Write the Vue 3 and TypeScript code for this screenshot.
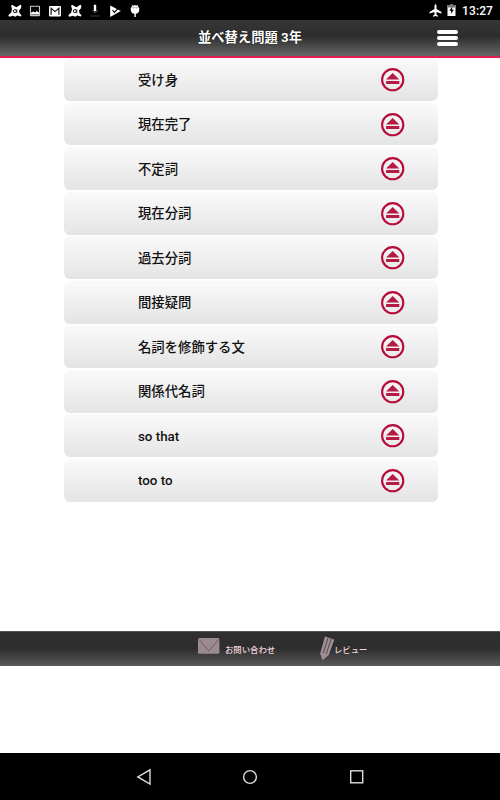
<script setup lang="ts">
const topics: string[] = [
  '受け身', '現在完了', '不定詞', '現在分詞', '過去分詞',
  '間接疑問', '名詞を修飾する文', '関係代名詞', 'so that', 'too to',
]
const statusIcons: string[] = ['avast', 'image', 'mail', 'avast', 'download', 'play', 'droid']
</script>

<template>
  <div class="screen">
    <div class="status">
      <div class="notes">
        <svg v-for="(icon, i) in statusIcons" :key="i" width="14" height="14" viewBox="0 0 14 14">
          <g v-if="icon === 'avast'">
            <path d="M3 1.6Q4.6 .4 6 2L8.6 3.2 12.2.8 13.4 1.4 13 4.2 11 6.6 11.4 9 13.6 11.4 12.8 12.6 9.4 11.4 7.2 12.8 5 11.8 1.2 12.8 .3 11.2 3.2 8.6 4 5Z" fill="#fff" />
            <ellipse cx="6.9" cy="7.1" rx="1.5" ry="1.6" fill="none" stroke="#000" stroke-width=".9" />
            <path d="M8.8 5.2V9" fill="none" stroke="#000" stroke-width=".8" />
          </g>
          <g v-else-if="icon === 'image'">
            <rect x="2.5" y="2.2" width="9" height="9.4" rx=".5" fill="none" stroke="#ccc" stroke-width="1.1" />
            <path d="M3 10.6V8.8L5.2 7.4 7 8.6 8.8 7 11 8.8V10.6Z" fill="#fff" />
          </g>
          <g v-else-if="icon === 'mail'">
            <rect x="1" y="2" width="12" height="10.4" rx="1" fill="#fff" />
            <path d="M3.1 10.8V4.2L7 7.6 10.9 4.2V10.8" fill="none" stroke="#000" stroke-width="1.1" />
          </g>
          <g v-else-if="icon === 'download'">
            <path d="M3.3 6.3H10.7L7 9.8ZM2.3 11.5H11.7V12.6H2.3Z" fill="#3b3b3b" />
            <path d="M7 .8V7" stroke="#fff" stroke-width="2.4" />
          </g>
          <g v-else-if="icon === 'play'">
            <path d="M2.2 1.4 12.8 7 2.2 13Z" fill="#fff" />
            <path d="M4.5 6.2 6.4 8.3 10.5 3.8" fill="none" stroke="#000" stroke-width="1.2" />
          </g>
          <g v-else>
            <path d="M2.8 3.7H11.2V6.5Q10.8 9.5 7.8 9.8V13H6.4V9.8Q3.2 9.5 2.8 6.5Z" fill="#fff" />
            <path d="M3.3 3.8Q4 1.6 7 1.6T10.7 3.8M4 .8 5 2.4M10 .8 9 2.4" fill="#fff" stroke="#fff" stroke-width=".7" />
            <path d="M5.2 4H6M8.1 4H8.9" stroke="#555" stroke-width=".8" />
          </g>
        </svg>
      </div>
      <div class="system">
        <svg width="13" height="13" viewBox="0 0 13 13"><path d="M5.5 1.4Q6.5-.7 7.5 1.4V5L12.5 8V9.4L7.5 7.9V10.7L9 11.8V12.8L6.5 12 4 12.8V11.8L5.5 10.7V7.9L.5 9.4V8L5.5 5Z" fill="#fff" /></svg>
        <svg class="battery" width="9" height="12" viewBox="0 0 9 12">
          <path d="M3 0H6V1H8.5V12H.5V1H3Z" fill="#fff" />
          <path d="M3 0H6V1H8.5V3.4H.5V1H3Z" fill="#777" />
          <path d="M5.2 2.8 2.3 6.7H4.1V9.8L6.9 5.8H5.2Z" fill="#000" />
        </svg>
        <span class="clock">13:27</span>
      </div>
    </div>

    <header class="bar">
      <span></span>
      <h1>並べ替え問題 3年</h1>
      <div class="menu"><i></i><i></i><i></i></div>
    </header>

    <main class="content">
      <ul class="topics">
        <li v-for="topic in topics" :key="topic">
          <span>{{ topic }}</span>
          <svg width="24" height="24" viewBox="0 0 24 24">
            <circle cx="11.7" cy="11.7" r="10.6" fill="none" stroke="#b70b39" stroke-width="2.1" />
            <path d="M11.7 5 18.3 11.4H5.1ZM5.1 13.1H18.3V16.1H5.1Z" fill="#b51b42" />
          </svg>
        </li>
      </ul>
    </main>

    <footer class="links">
      <a class="contact">
        <svg width="22" height="17" viewBox="0 0 22 17">
          <rect x="0" y=".1" width="21.4" height="15.6" rx="1.5" fill="#9b8a8f" />
          <path d="M1 1.6 10.8 12.8 20.6 1.6" fill="none" stroke="#685d60" stroke-width="1" />
        </svg>
        <span>お問い合わせ</span>
      </a>
      <a class="review">
        <svg width="15" height="25" viewBox="0 0 15 25">
          <path d="M5 .4 14.3 3.6 8.8 19 2.6 24.2 .2 17.5Z" fill="#a18f94" />
          <path d="M8.2 1.6 3.2 17.2M11.3 2.8 6.2 18" stroke="#453f41" stroke-width=".9" />
        </svg>
        <span>レビュー</span>
      </a>
    </footer>

    <div class="blank"></div>

    <nav class="system-nav">
      <svg width="16" height="18" viewBox="0 0 16 18"><path d="M14 1.8V16L1.8 8.9Z" fill="none" stroke="#ddd" stroke-width="1.4" /></svg>
      <svg width="16" height="18" viewBox="0 0 16 18"><circle cx="8" cy="9" r="6.4" fill="none" stroke="#ddd" stroke-width="1.4" /></svg>
      <svg width="16" height="18" viewBox="0 0 16 18"><rect x="1.7" y="2.8" width="12" height="12" fill="none" stroke="#ddd" stroke-width="1.4" /></svg>
    </nav>
  </div>
</template>

<style>
body { margin: 0; background: #fff; }
</style>

<style scoped>
.screen {
  width: 500px;
  height: 800px;
  display: flex;
  flex-direction: column;
  overflow: hidden;
  background: #fff;
  font-family: Roboto, "Noto Sans CJK JP", sans-serif;
}
.status {
  height: 20px;
  flex: none;
  background: #000;
  color: #fff;
  display: flex;
  justify-content: space-between;
  padding: 0 7px 0 8px;
}
.notes { display: flex; gap: 6px; padding-top: 4px; }
.system { display: flex; align-items: flex-start; padding-top: 4px; }
.battery { margin: 0 6px 0 5px; }
.clock { font-size: 12px; line-height: 14px; font-weight: 500; letter-spacing: .1px; }
.bar {
  height: 38px;
  flex: none;
  box-sizing: border-box;
  display: grid;
  grid-template-columns: 1fr auto 1fr;
  align-items: center;
  border-bottom: 2px solid #e31b4e;
  background: linear-gradient(#363636 0%, #2d2d2d 45%, #666 100%);
  color: #fff;
}
h1 {
  margin: 0;
  font-size: 13.3px;
  line-height: 18px;
  font-weight: 700;
  text-shadow: 0 0 1px #000;
}
.menu {
  justify-self: end;
  width: 21px;
  margin: 0 42px 1px 0;
  display: flex;
  flex-direction: column;
  gap: 2px;
}
.menu i { height: 4px; border-radius: 2px; background: #fff; }
.content { height: 573px; flex: none; }
.topics {
  width: 373.5px;
  margin: 0 0 0 64px;
  padding: 0;
  list-style: none;
  display: flex;
  flex-direction: column;
  gap: 1.6px;
}
.topics li {
  height: 42.95px;
  box-sizing: border-box;
  padding: 1.4px 32.5px 0 74px;
  display: flex;
  align-items: center;
  justify-content: space-between;
  border-radius: 6px;
  background: linear-gradient(#fafafa, #e4e4e4);
  color: #111;
  font-size: 13.35px;
  line-height: 18px;
  font-weight: 500;
}
.topics span { padding-top: 1px; }
.links {
  height: 35px;
  flex: none;
  box-sizing: border-box;
  display: flex;
  align-items: flex-start;
  padding-left: 198px;
  border-top: 1px solid #555;
  background: linear-gradient(#303030 0%, #2d2d2d 48%, #595959 100%);
  color: #f0d5dd;
  font-size: 8.4px;
  line-height: 12px;
  font-weight: 500;
}
.links a { display: flex; }
.contact { width: 122px; padding-top: 6px; gap: 5px; }
.contact span { padding-top: 6px; }
.review { padding-top: 4px; }
.review span { padding-top: 8px; margin-left: -1px; }
.blank { flex: 1; }
.system-nav {
  height: 47px;
  flex: none;
  box-sizing: border-box;
  display: flex;
  align-items: center;
  justify-content: center;
  gap: 90.5px;
  background: #000;
}
</style>
